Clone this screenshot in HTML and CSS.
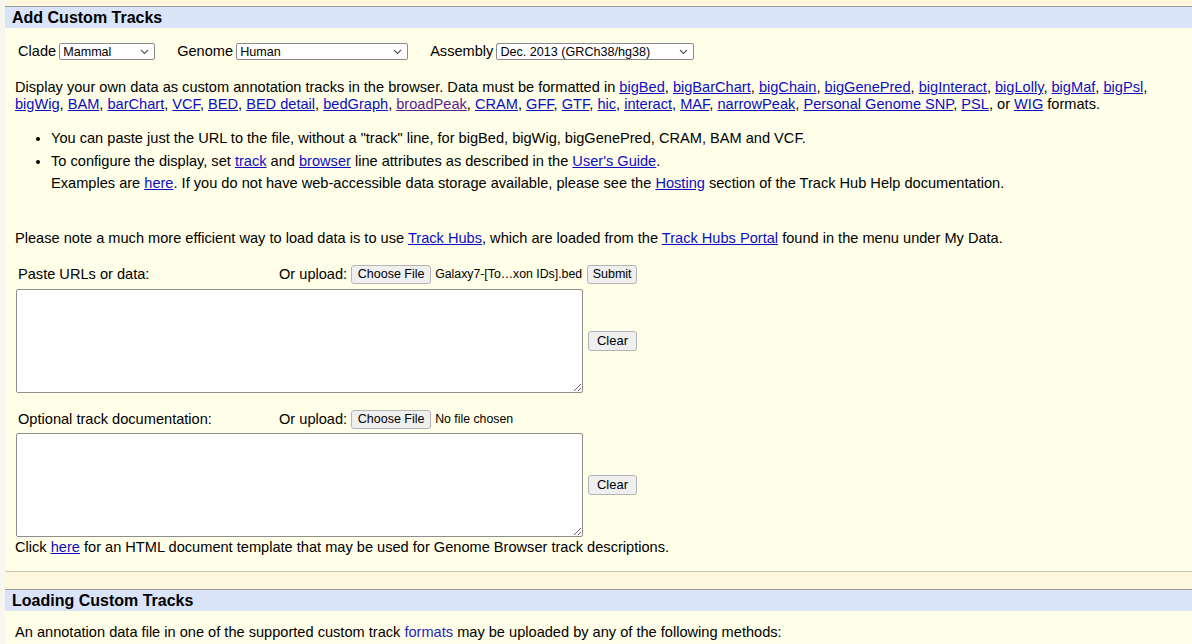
FILE: index.html
```html
<!DOCTYPE html>
<html lang="en">
<head>
<meta charset="utf-8">
<title>Add Custom Tracks</title>
<link rel="stylesheet" href="styles.css">
</head>
<body>
<div class="page">
  <section class="section first">
    <h2 class="sec-head">Add Custom Tracks</h2>
    <div class="content">
      <div class="selrow">
        <span class="lbl">Clade</span>
        <span class="selwrap w-clade">
          <select class="sel"><option>Mammal</option></select>
          <svg class="chev" width="9" height="6" viewBox="0 0 9 6"><path d="M1 1 L4.5 4.5 L8 1" fill="none" stroke="#555" stroke-width="1.1"/></svg>
        </span>
        <span class="lbl gap">Genome</span>
        <span class="selwrap w-genome">
          <select class="sel"><option>Human</option></select>
          <svg class="chev" width="9" height="6" viewBox="0 0 9 6"><path d="M1 1 L4.5 4.5 L8 1" fill="none" stroke="#555" stroke-width="1.1"/></svg>
        </span>
        <span class="lbl gap">Assembly</span>
        <span class="selwrap w-assembly">
          <select class="sel"><option>Dec. 2013 (GRCh38/hg38)</option></select>
          <svg class="chev" width="9" height="6" viewBox="0 0 9 6"><path d="M1 1 L4.5 4.5 L8 1" fill="none" stroke="#555" stroke-width="1.1"/></svg>
        </span>
      </div>

      <p class="intro">Display your own data as custom annotation tracks in the browser. Data must be formatted in <a href="#">bigBed</a>, <a href="#">bigBarChart</a>, <a href="#">bigChain</a>, <a href="#">bigGenePred</a>, <a href="#">bigInteract</a>, <a href="#">bigLolly</a>, <a href="#">bigMaf</a>, <a href="#">bigPsl</a>, <a href="#">bigWig</a>, <a href="#">BAM</a>, <a href="#">barChart</a>, <a href="#">VCF</a>, <a href="#">BED</a>, <a href="#">BED detail</a>, <a href="#">bedGraph</a>, <a href="#" class="visited">broadPeak</a>, <a href="#">CRAM</a>, <a href="#">GFF</a>, <a href="#">GTF</a>, <a href="#">hic</a>, <a href="#">interact</a>, <a href="#">MAF</a>, <a href="#">narrowPeak</a>, <a href="#">Personal Genome SNP</a>, <a href="#">PSL</a>, or <a href="#">WIG</a> formats.</p>

      <ul class="tips">
        <li>You can paste just the URL to the file, without a "track" line, for bigBed, bigWig, bigGenePred, CRAM, BAM and VCF.</li>
        <li>To configure the display, set <a href="#">track</a> and <a href="#">browser</a> line attributes as described in the <a href="#">User's Guide</a>.<br>Examples are <a href="#">here</a>. If you do not have web-accessible data storage available, please see the <a href="#">Hosting</a> section of the Track Hub Help documentation.</li>
      </ul>

      <p class="note">Please note a much more efficient way to load data is to use <a href="#">Track Hubs</a>, which are loaded from the <a href="#">Track Hubs Portal</a> found in the menu under My Data.</p>

      <div class="uprow r1">
        <span class="uplabel">Paste URLs or data:</span>
        <span class="upload">Or upload: <button class="btn file">Choose File</button><span class="fname">Galaxy7-[To…xon IDs].bed</span><button class="btn submit">Submit</button></span>
      </div>
      <div class="tarow">
        <textarea class="ta"></textarea>
        <button class="btn clear">Clear</button>
      </div>

      <div class="uprow r2">
        <span class="uplabel">Optional track documentation:</span>
        <span class="upload">Or upload: <button class="btn file">Choose File</button><span class="fname">No file chosen</span></span>
      </div>
      <div class="tarow t2">
        <textarea class="ta"></textarea>
        <button class="btn clear">Clear</button>
      </div>

      <p class="click">Click <a href="#">here</a> for an HTML document template that may be used for Genome Browser track descriptions.</p>
    </div>
  </section>

  <section class="section second">
    <h2 class="sec-head">Loading Custom Tracks</h2>
    <div class="content">
      <p class="load">An annotation data file in one of the supported custom track <a href="#" class="plain">formats</a> may be uploaded by any of the following methods:</p>
    </div>
  </section>
</div>
</body>
</html>
```

FILE: styles.css
```css
html, body {
  margin: 0;
  padding: 0;
}
body {
  background: #f7f7f0;
  font-family: "Liberation Sans", Arial, Helvetica, sans-serif;
  font-size: 14.6px;
  color: #000;
  overflow: hidden;
}
.page {
  margin-left: 5px;
  background: #fdf8dd;
  padding-top: 6px;
  min-height: 644px;
}
.section {
  background: #fffee8;
  border-top: 1px solid #9a9a9a;
}
.section.first {
  border-bottom: 1px solid #c8c6b0;
  margin-bottom: 17px;
}
.sec-head {
  margin: 0;
  height: 21px;
  line-height: 21px;
  background: #d9e4f8;
  font-size: 16px;
  font-weight: bold;
  padding-left: 7px;
}
.content {
  padding: 0 10px 15px 10px;
}
a {
  color: #0d0dc4;
  text-decoration: underline;
}
a.visited {
  color: #5b1d8e;
}
a.plain {
  text-decoration: none;
  color: #1f1fc0;
}

/* select row */
.selrow {
  display: flex;
  align-items: center;
  height: 18px;
  margin-top: 14px;
  padding-left: 3px;
}
.lbl {
  margin-right: 3px;
}
.lbl.gap {
  margin-left: 22px;
}
.selwrap {
  position: relative;
  display: inline-block;
  height: 17px;
}
.sel {
  appearance: none;
  -webkit-appearance: none;
  height: 17px;
  width: 100%;
  box-sizing: border-box;
  border: 1px solid #8a8a8a;
  border-radius: 2px;
  background: #fff;
  font-family: "Liberation Sans", Arial, Helvetica, sans-serif;
  font-size: 12.6px;
  padding: 0 0 0 3px;
  margin: 0;
  color: #000;
}
.chev {
  position: absolute;
  right: 6px;
  top: 6px;
  pointer-events: none;
}
.w-clade { width: 96px; }
.w-genome { width: 172px; }
.w-assembly { width: 198px; }

.intro {
  margin: 19px 0 0 0;
  line-height: 17px;
}
.tips {
  margin: 14px 0 0 0;
  padding-left: 36px;
  line-height: 22.5px;
}
.note {
  margin: 35px 0 0 0;
  line-height: 17px;
}

/* upload rows */
.uprow {
  display: flex;
  align-items: center;
  height: 19px;
  padding-left: 3px;
}
.uprow.r1 { margin-top: 18px; }
.uprow.r2 { margin-top: 17px; }
.uplabel {
  width: 261px;
}
.upload {
  display: flex;
  align-items: center;
}
.btn {
  font-family: "Liberation Sans", Arial, Helvetica, sans-serif;
  font-size: 12.5px;
  color: #000;
  background: #efefef;
  border: 1px solid #b4b4b4;
  border-radius: 3px;
  height: 19px;
  padding: 0 7px;
  margin: 0;
  box-sizing: border-box;
}
.btn.file {
  margin-left: 4px;
  width: 80px;
  padding: 0;
}
.fname {
  font-size: 12.3px;
  margin-left: 4px;
}
.btn.submit {
  margin-left: 5px;
  width: 50px;
  padding: 0;
}
.tarow {
  display: flex;
  align-items: center;
  margin-top: 5px;
  padding-left: 1px;
}
.tarow.t2 { margin-top: 4px; }
.ta {
  width: 567px;
  height: 104px;
  box-sizing: border-box;
  border: 1px solid #8e8e8e;
  border-radius: 2px;
  background: #fff;
  margin: 0;
  resize: both;
}
.btn.clear {
  margin-left: 5px;
  width: 49px;
  height: 20px;
  font-size: 13px;
  padding: 0;
}
.click {
  margin: 2px 0 0 0;
  line-height: 17px;
}
.load {
  margin: 13px 0 0 0;
  line-height: 17px;
}
```
